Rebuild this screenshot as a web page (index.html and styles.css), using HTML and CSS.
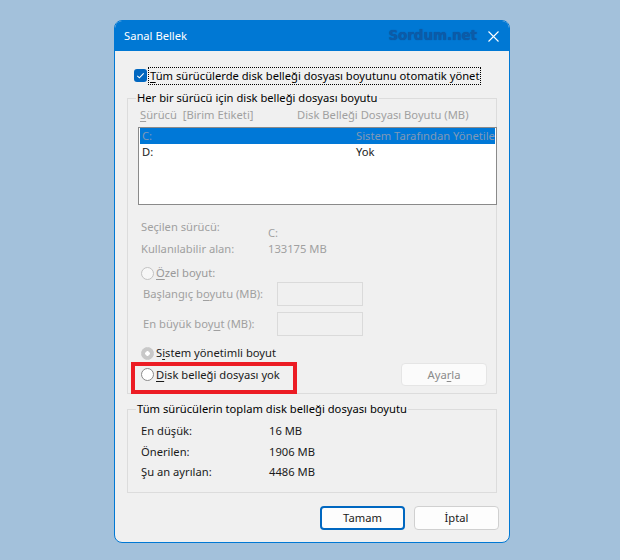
FILE: index.html
```html
<!DOCTYPE html>
<html lang="tr">
<head>
    <meta charset="UTF-8">
    <title>Sanal Bellek</title>
    <link rel="stylesheet" href="styles.css">
</head>
<body>
    <div class="window">
        <div class="titlebar">
            <span class="title">Sanal Bellek</span>
            <span class="brand">Sordum.net</span>
            <svg class="close" width="11" height="11" viewBox="0 0 11 11">
                <path d="M0.5 0.5 L10.5 10.5 M10.5 0.5 L0.5 10.5" stroke="#fff" stroke-width="1.1" fill="none"/>
            </svg>
        </div>

        <div class="content">
            <div class="auto-row">
                <span class="checkbox">
                    <svg width="13" height="13" viewBox="0 0 13 13">
                        <path d="M3.3 6.8 L5.4 8.8 L9.7 4.4" stroke="#fff" stroke-width="1.1" fill="none"/>
                    </svg>
                </span>
                <span class="focus"><u>T</u>üm sürücülerde disk belleği dosyası boyutunu otomatik yönet</span>
            </div>

            <fieldset class="group group-drives">
                <legend>Her bir sürücü için disk belleği dosyası boyutu</legend>

                <div class="list-head disabled">
                    <span class="col-drive"><u>S</u>ürücü&nbsp; [Birim Etiketi]</span>
                    <span>Disk Belleği Dosyası Boyutu (MB)</span>
                </div>

                <div class="listbox">
                    <div class="list-row selected">
                        <span class="col-drive">C:</span>
                        <span class="col-size">Sistem Tarafından Yönetilen</span>
                    </div>
                    <div class="list-row">
                        <span class="col-drive">D:</span>
                        <span class="col-size">Yok</span>
                    </div>
                </div>

                <div class="info disabled">
                    <span>Seçilen sürücü:</span>
                    <span class="info-drive">C:</span>
                    <span>Kullanılabilir alan:</span>
                    <span>133175 MB</span>
                </div>

                <div class="radio-row radio-custom disabled">
                    <span class="radio"></span>
                    <span><u>Ö</u>zel boyut:</span>
                </div>

                <div class="size-row disabled">
                    <span class="size-label">Başlangıç b<u>o</u>yutu (MB):</span>
                    <span class="textbox"></span>
                </div>
                <div class="size-row size-row-max disabled">
                    <span class="size-label">En büyük boy<u>u</u>t (MB):</span>
                    <span class="textbox"></span>
                </div>

                <div class="radio-row radio-system">
                    <span class="radio radio-on"></span>
                    <span>S<u>i</u>stem yönetimli boyut</span>
                </div>

                <div class="radio-row radio-none">
                    <span class="radio"></span>
                    <span><u>D</u>isk belleği dosyası yok</span>
                    <span class="button button-set">Aya<u>r</u>la</span>
                    <span class="highlight"></span>
                </div>
            </fieldset>

            <fieldset class="group group-total">
                <legend>Tüm sürücülerin toplam disk belleği dosyası boyutu</legend>
                <div class="totals">
                    <span>En düşük:</span>
                    <span>16 MB</span>
                    <span>Önerilen:</span>
                    <span>1906 MB</span>
                    <span>Şu an ayrılan:</span>
                    <span>4486 MB</span>
                </div>
            </fieldset>

            <div class="actions">
                <span class="button button-default">Tamam</span>
                <span class="button">İptal</span>
            </div>
        </div>
    </div>
</body>
</html>
```

FILE: styles.css
```css
* {
    margin: 0;
    padding: 0;
    box-sizing: border-box;
}

body {
    background: #a3c1db;
    font-family: 'Noto Sans', sans-serif;
    font-size: 11.2px;
    line-height: 16px;
    color: #1a1a1a;
}

u {
    text-decoration: underline;
    text-underline-offset: 2px;
}

.window {
    width: 396px;
    height: 523px;
    margin: 20px 0 0 114px;
    background: #f0f0f0;
    border: 1px solid #0078d4;
    border-radius: 8px;
    overflow: hidden;
}

.titlebar {
    height: 30px;
    background: #0078d4;
    display: flex;
    align-items: center;
    padding: 0 10px 0 9px;
    color: #fff;
}

.title {
    flex: 1;
}

.brand {
    font-family: 'DejaVu Sans', sans-serif;
    font-weight: bold;
    font-size: 13.4px;
    color: #0c5ba8;
    text-shadow: 0 0 1px #0a4f94;
    margin-right: 11px;
}

.close {
    display: block;
}

.content {
    padding: 16px 12px 0 12px;
}

.auto-row {
    display: flex;
    align-items: center;
    height: 17px;
    padding-left: 7px;
    white-space: nowrap;
}

.checkbox {
    width: 13px;
    height: 13px;
    border-radius: 3px;
    background: #0067c0;
    display: block;
    flex: none;
}

.checkbox svg {
    display: block;
}

.focus {
    margin-left: 2px;
    padding: 0 1px;
    outline: 1px dotted #000;
    outline-offset: 0;
    line-height: 16px;
    color: #000;
}

.group {
    border: 1px solid #dcdcdc;
    min-width: 0;
}

.group legend {
    margin-left: 8px;
    padding: 0 1px;
    color: #000;
}

.group-drives {
    margin-top: 6px;
    padding: 0 0 7px 0;
}

.disabled {
    color: #a0a0a0;
}

.list-head {
    display: flex;
    margin-top: 1px;
    padding-left: 12px;
}

.list-head .col-drive {
    width: 157px;
}

.listbox {
    width: 359px;
    height: 78px;
    margin: 4px 0 0 10px;
    background: #fff;
    border: 1px solid #8a8a8a;
    padding: 0 1px;
}

.list-row {
    display: flex;
    height: 16px;
    padding-left: 2px;
    white-space: nowrap;
    overflow: hidden;
    color: #1a1a1a;
}

.list-row .col-drive {
    width: 214px;
    flex: none;
}

.list-row.selected {
    background: #0078d7;
    color: #8099b6;
}

.info {
    display: grid;
    grid-template-columns: 127px auto;
    grid-template-rows: 22px 16px;
    margin-top: 14px;
    padding-left: 13px;
}

.info-drive {
    align-self: end;
}

.radio-row {
    display: flex;
    align-items: center;
    padding-left: 13px;
}

.radio {
    width: 13px;
    height: 13px;
    border-radius: 50%;
    border: 1px solid #8a8a8a;
    background: #fff;
    margin-right: 2px;
    flex: none;
}

.radio-custom {
    margin-top: 8px;
    color: #9a9a9a;
}

.radio-custom .radio {
    border-color: #c2c2c2;
    background: #f7f7f7;
}

.radio-on {
    border-color: #c8c8c8;
    background: radial-gradient(circle, #fff 0 2px, #c8c8c8 2.5px);
}

.size-row {
    display: flex;
    align-items: center;
    padding-left: 15px;
    margin-top: 1px;
}

.size-row-max {
    margin-top: 6px;
}

.size-label {
    width: 134px;
}

.textbox {
    width: 86px;
    height: 24px;
    border: 1px solid #dadada;
    background: #f0f0f0;
}

.radio-system {
    margin-top: 9px;
}

.radio-none {
    margin-top: 2px;
    position: relative;
}

.button {
    display: flex;
    align-items: center;
    justify-content: center;
    width: 85px;
    height: 24px;
    background: #fdfdfd;
    border: 1px solid #d0d0d0;
    border-radius: 4px;
    color: #1a1a1a;
}

.button-set {
    margin-left: auto;
    margin-right: 9px;
    width: 86px;
    height: 23px;
    background: #fbfbfb;
    border-color: #e5e5e5;
    color: #8a8a8a;
}

.highlight {
    position: absolute;
    left: 3px;
    top: -1px;
    width: 166px;
    height: 32px;
    border: 4px solid #ec1c24;
}

.group-total {
    margin-top: 7px;
    padding: 0 0 12px 0;
}

.totals {
    display: grid;
    grid-template-columns: 128px auto;
    row-gap: 4.5px;
    margin-top: 6px;
    padding-left: 13px;
}

.actions {
    display: flex;
    justify-content: flex-end;
    gap: 9px;
    margin: 13px -2px 0 0;
}

.button-default {
    border: 2px solid #0067c0;
}
```
